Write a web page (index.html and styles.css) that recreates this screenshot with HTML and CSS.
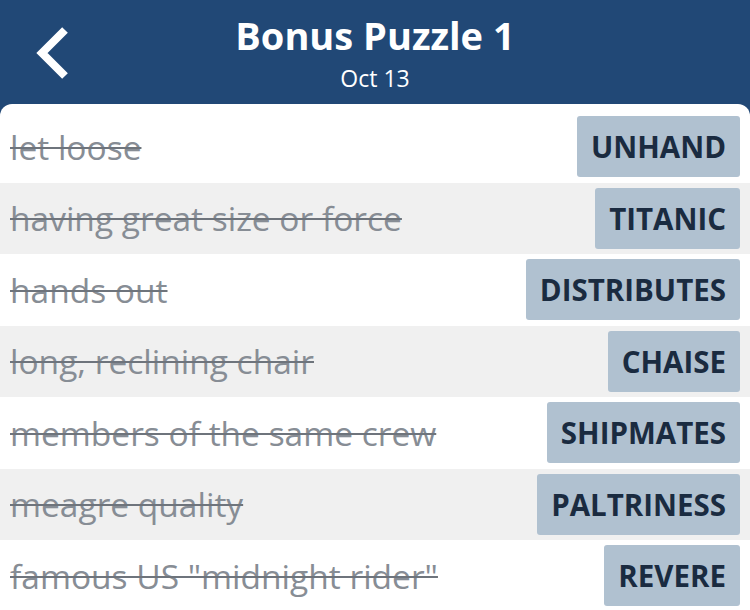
FILE: index.html
```html
<!DOCTYPE html>
<html>
<head>
<meta charset="utf-8">
<link rel="stylesheet" href="styles.css">
</head>
<body>
<div class="app">
  <header class="header">
    <div class="back">
      <svg width="44" height="56" viewBox="0 0 44 56"><path d="M37 3 L14 26 L37 49" fill="none" stroke="#fff" stroke-width="8" stroke-linecap="butt" stroke-linejoin="miter"/></svg>
    </div>
    <div class="titles">
      <div class="title">Bonus Puzzle 1</div>
      <div class="subtitle">Oct 13</div>
    </div>
  </header>
  <main class="panel">
    <div class="row"><span class="clue">let loose</span><span class="answer">UNHAND</span></div>
    <div class="row alt"><span class="clue">having great size or force</span><span class="answer">TITANIC</span></div>
    <div class="row"><span class="clue">hands out</span><span class="answer">DISTRIBUTES</span></div>
    <div class="row alt"><span class="clue">long, reclining chair</span><span class="answer">CHAISE</span></div>
    <div class="row"><span class="clue">members of the same crew</span><span class="answer">SHIPMATES</span></div>
    <div class="row alt"><span class="clue">meagre quality</span><span class="answer">PALTRINESS</span></div>
    <div class="row"><span class="clue">famous US "midnight rider"</span><span class="answer">REVERE</span></div>
  </main>
</div>
</body>
</html>
```
FILE: styles.css
```css
html, body {
  margin: 0;
  padding: 0;
  background: #214876;
  font-family: "Open Sans", "Noto Sans", sans-serif;
  overflow: hidden;
}
.app {
  width: 750px;
  height: 610px;
  display: flex;
  flex-direction: column;
}
.header {
  height: 104px;
  background: #214876;
  position: relative;
  display: flex;
  justify-content: center;
  color: #fff;
}
.back {
  position: absolute;
  left: 28px;
  top: 27px;
}
.titles {
  display: flex;
  flex-direction: column;
  align-items: center;
  padding-top: 11px;
}
.title {
  font-size: 38px;
  font-weight: 700;
  line-height: 48px;
}
.subtitle {
  font-size: 23px;
  line-height: 38px;
}
.panel {
  flex: 1;
  background: #fff;
  border-radius: 12px 12px 0 0;
  padding-top: 7px;
  overflow: hidden;
}
.row {
  height: 71.5px;
  display: flex;
  align-items: center;
  justify-content: space-between;
  padding: 0 10px;
  box-sizing: border-box;
}
.row.alt {
  background: #f0f0f0;
}
.clue {
  font-size: 33.5px;
  color: #878d95;
  text-decoration: line-through;
  text-decoration-color: #6e747c;
  text-decoration-thickness: 2px;
}
.answer {
  background: #b0c1d0;
  color: #1a2b40;
  font-weight: 700;
  font-size: 29.5px;
  height: 61px;
  line-height: 61px;
  padding: 0 14px;
  border-radius: 3px;
  box-sizing: border-box;
}
```
